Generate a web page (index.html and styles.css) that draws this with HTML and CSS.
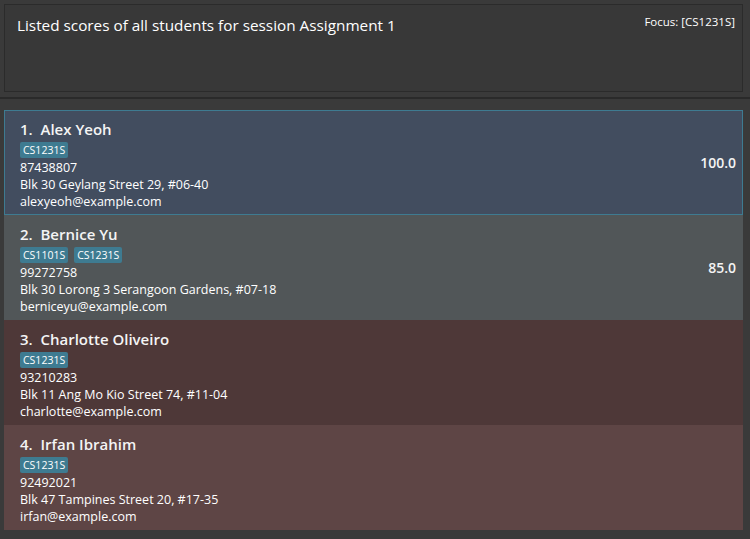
FILE: index.html
```html
<!DOCTYPE html>
<html>
<head>
<meta charset="utf-8">
<link rel="stylesheet" href="styles.css">
</head>
<body>
<div class="app">
  <div class="result-box">
    <p class="result-text">Listed scores of all students for session Assignment 1</p>
    <span class="focus">Focus: [CS1231S]</span>
  </div>
  <div class="divider"></div>
  <div class="list">
    <div class="card selected">
      <div class="info">
        <div class="name">1.&nbsp; Alex Yeoh</div>
        <div class="tags"><span class="tag">CS1231S</span></div>
        <div class="line">87438807</div>
        <div class="line">Blk 30 Geylang Street 29, #06-40</div>
        <div class="line">alexyeoh@example.com</div>
      </div>
      <div class="score">100.0</div>
    </div>
    <div class="card gray">
      <div class="info">
        <div class="name">2.&nbsp; Bernice Yu</div>
        <div class="tags"><span class="tag">CS1101S</span><span class="tag">CS1231S</span></div>
        <div class="line">99272758</div>
        <div class="line">Blk 30 Lorong 3 Serangoon Gardens, #07-18</div>
        <div class="line">berniceyu@example.com</div>
      </div>
      <div class="score">85.0</div>
    </div>
    <div class="card red-dark">
      <div class="info">
        <div class="name">3.&nbsp; Charlotte Oliveiro</div>
        <div class="tags"><span class="tag">CS1231S</span></div>
        <div class="line">93210283</div>
        <div class="line">Blk 11 Ang Mo Kio Street 74, #11-04</div>
        <div class="line">charlotte@example.com</div>
      </div>
      <div class="score"></div>
    </div>
    <div class="card red-light">
      <div class="info">
        <div class="name">4.&nbsp; Irfan Ibrahim</div>
        <div class="tags"><span class="tag">CS1231S</span></div>
        <div class="line">92492021</div>
        <div class="line">Blk 47 Tampines Street 20, #17-35</div>
        <div class="line">irfan@example.com</div>
      </div>
      <div class="score"></div>
    </div>
  </div>
</div>
</body>
</html>
```
FILE: styles.css
```css
html, body {
  margin: 0;
  padding: 0;
  background: #3a3a3a;
  width: 750px;
  height: 539px;
  overflow: hidden;
  font-family: "Open Sans", "Noto Sans", sans-serif;
  color: #ffffff;
}
.app {
  display: flex;
  flex-direction: column;
}
.result-box {
  margin: 4px 7px 0 4px;
  height: 86px;
  border: 1px solid #2b2b2b;
  background: #383838;
  display: flex;
  justify-content: space-between;
  align-items: flex-start;
  padding: 0 7px 0 12px;
}
.result-text {
  margin: 0;
  padding-top: 9px;
  font-size: 15.3px;
  line-height: 22px;
  color: #ffffff;
}
.focus {
  padding-top: 9px;
  font-size: 11.5px;
  line-height: 16px;
  color: #ffffff;
}
.divider {
  margin-top: 5px;
  height: 2px;
  background: #2a2a2a;
}
.list {
  margin: 11px 7px 0 4px;
  display: flex;
  flex-direction: column;
}
.card {
  height: 105px;
  box-sizing: border-box;
  display: flex;
  justify-content: space-between;
  align-items: center;
  padding: 0 6px 0 15px;
  border: 1px solid transparent;
}
.card.selected {
  background: #424d5f;
  border-color: #3e7b91;
}
.card.gray { background: #515658; }
.card.red-dark { background: #4e3838; }
.card.red-light { background: #5e4545; }
.info {
  display: flex;
  flex-direction: column;
  align-self: flex-start;
  padding-top: 8px;
}
.name {
  font-size: 15px;
  font-weight: 600;
  line-height: 20px;
  color: #f4f4f4;
}
.tags {
  display: flex;
  gap: 6px;
  margin: 3px 0 1px;
}
.tag {
  background: #3e7b91;
  color: #ffffff;
  font-size: 10.5px;
  line-height: 16px;
  padding: 0 3px;
  border-radius: 2px;
}
.line {
  font-size: 12.5px;
  line-height: 17px;
  color: #ffffff;
}
.score {
  font-size: 14px;
  font-weight: 600;
  color: #f4f4f4;
  padding-bottom: 1px;
}
```
